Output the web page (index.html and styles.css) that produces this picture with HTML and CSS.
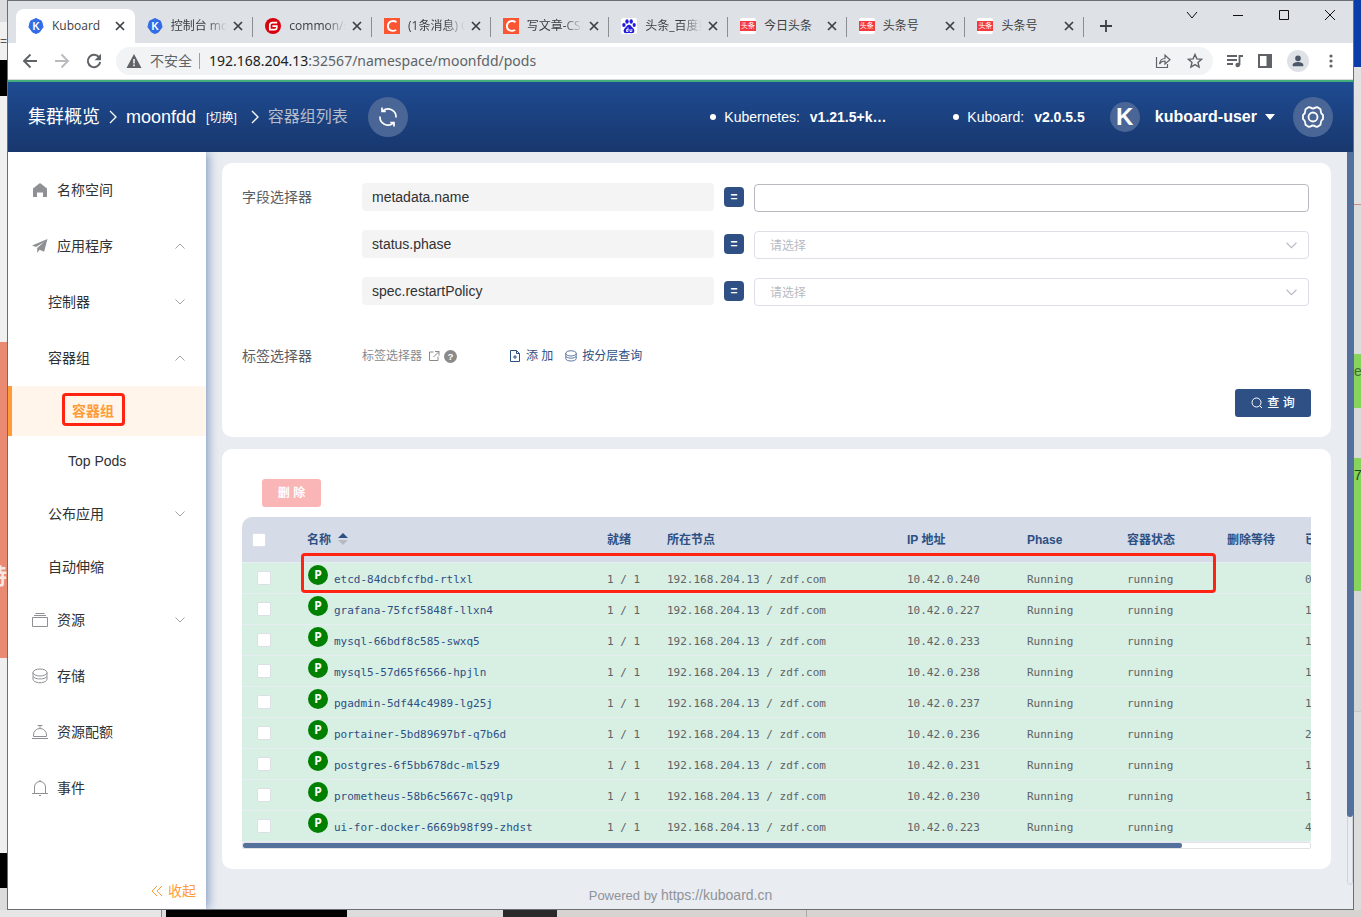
FILE: index.html
```html
<!DOCTYPE html>
<html lang="zh-CN">
<head>
<meta charset="utf-8">
<title>Kuboard</title>
<link rel="stylesheet" href="styles.css">
</head>
<body>
<svg class="defs" aria-hidden="true">
  <symbol id="i-close" viewBox="0 0 10 10"><path d="M1 1l8 8M9 1L1 9" fill="none" stroke="currentColor" stroke-width="1.7"/></symbol>
  <symbol id="i-right" viewBox="0 0 8 14"><path d="M1 1l6 6-6 6" fill="none" stroke="currentColor" stroke-width="1.3"/></symbol>
  <symbol id="i-down" viewBox="0 0 10 6"><path d="M.5 .5L5 5l4.500-4.500" fill="none" stroke="currentColor" stroke-width="1"/></symbol>
  <symbol id="i-up" viewBox="0 0 10 6"><path d="M.5 5.500L5 1l4.500 4.500" fill="none" stroke="currentColor" stroke-width="1"/></symbol>
  <symbol id="i-kuboard" viewBox="0 0 16 16"><path d="M8 .5l5.500 2.600 1.600 5.900-3.800 5.200L8 15.500l-3.300-1.300L.9 9l1.600-5.900z" fill="#326ce5" stroke="#326ce5" stroke-linejoin="round"/><text x="8" y="11.500" text-anchor="middle" font-family="Liberation Sans, sans-serif" font-size="10" font-weight="700" fill="#fff">K</text></symbol>
  <symbol id="i-disks" viewBox="0 0 16 16"><g fill="none" stroke="currentColor"><ellipse cx="8" cy="4.500" rx="7" ry="3.500"/><path d="M1 4.500v3.200c0 1.900 3 3.200 7 3.200s7-1.300 7-3.200V4.500M1 8.500v2.800c0 1.900 3 3.400 7 3.400s7-1.500 7-3.400V8.500"/></g></symbol>
</svg>

<aside class="edge edge-left" aria-hidden="true">
  <div class="l1"></div><div class="l2">=6</div><div class="l3"></div><div class="l4"></div><div class="l5">特</div><div class="l6"></div><div class="l7"></div><div class="l8"></div>
</aside>

<div class="window">
  <div class="tabstrip">
    <div class="tabs">
      <div class="tab active"><svg class="fav"><use href="#i-kuboard"/></svg><span>Kuboard</span><button aria-label="关闭"><svg><use href="#i-close"/></svg></button></div>
      <div class="tab"><svg class="fav"><use href="#i-kuboard"/></svg><span>控制台 moonfdd</span><button aria-label="关闭"><svg><use href="#i-close"/></svg></button></div>
      <div class="tab"><svg class="fav" viewBox="0 0 16 16"><circle cx="8" cy="8" r="8" fill="#d7000f"/><path d="M12.200 4.600H7.300a2.500 2.500 0 0 0-2.500 2.500v4.500h4.900a2.100 2.100 0 0 0 2.100-2.100V8.200H7.400" fill="none" stroke="#fff" stroke-width="1.700"/></svg><span>common/src</span><button aria-label="关闭"><svg><use href="#i-close"/></svg></button></div>
      <div class="tab"><svg class="fav" viewBox="0 0 16 16"><path fill="#fc5531" d="M0 0h16v16H0z"/><path d="M12.500 4.100C9 2 4.200 3.200 3.900 8c-.2 4.800 4.600 5.700 8.300 4" fill="none" stroke="#fff" stroke-width="1.900"/></svg><span>(1条消息) CSDN</span><button aria-label="关闭"><svg><use href="#i-close"/></svg></button></div>
      <div class="tab"><svg class="fav" viewBox="0 0 16 16"><path fill="#fc5531" d="M0 0h16v16H0z"/><path d="M12.500 4.100C9 2 4.200 3.200 3.900 8c-.2 4.800 4.600 5.700 8.300 4" fill="none" stroke="#fff" stroke-width="1.900"/></svg><span>写文章-CSDN</span><button aria-label="关闭"><svg><use href="#i-close"/></svg></button></div>
      <div class="tab"><svg class="fav" viewBox="0 0 16 16"><rect width="16" height="16" rx="2" fill="#fff"/><g fill="#2319dc"><ellipse cx="2.900" cy="7" rx="1.700" ry="2.100"/><ellipse cx="6" cy="3.500" rx="1.700" ry="2.300"/><ellipse cx="10.200" cy="3.500" rx="1.700" ry="2.300"/><ellipse cx="13.200" cy="7" rx="1.600" ry="2.100"/><path d="M8 6.800c-2 0-2.400 2-3.700 3-1.500 1.300-2 2.500-1.500 4 .6 2 2.700 1.300 5.200 1.300s4.600.7 5.200-1.300c.5-1.500 0-2.700-1.500-4-1.300-1-1.700-3-3.700-3z"/></g><path d="M7 9.500v4H5.500v-2H7M9 11v2.500h1.800V11" fill="none" stroke="#fff" stroke-width=".9"/></svg><span>头条_百度搜索</span><button aria-label="关闭"><svg><use href="#i-close"/></svg></button></div>
      <div class="tab"><i class="fav tt">头条</i><span>今日头条</span><button aria-label="关闭"><svg><use href="#i-close"/></svg></button></div>
      <div class="tab"><i class="fav tt">头条</i><span>头条号</span><button aria-label="关闭"><svg><use href="#i-close"/></svg></button></div>
      <div class="tab"><i class="fav tt">头条</i><span>头条号</span><button aria-label="关闭"><svg><use href="#i-close"/></svg></button></div>
    </div>
    <button class="newtab" aria-label="新标签页"><svg viewBox="0 0 12 12"><path d="M6 0v12M0 6h12" stroke="currentColor" stroke-width="1.800"/></svg></button>
    <div class="winctl">
      <button aria-label="搜索标签页"><svg viewBox="0 0 12 12"><path d="M1 3l5 6 5-6" fill="none" stroke="currentColor"/></svg></button>
      <button aria-label="最小化"><svg viewBox="0 0 12 12"><path d="M1 6.500h10" stroke="currentColor"/></svg></button>
      <button aria-label="最大化"><svg viewBox="0 0 12 12"><path d="M1.500 1.500h9v9h-9z" fill="none" stroke="currentColor"/></svg></button>
      <button aria-label="关闭窗口"><svg viewBox="0 0 12 12"><path d="M1 1l10 10M11 1L1 11" stroke="currentColor"/></svg></button>
    </div>
  </div>

  <div class="toolbar">
    <button aria-label="后退"><svg viewBox="0 0 16 16"><path d="M15 8H2M8.500 1.500L2 8l6.500 6.500" fill="none" stroke="currentColor" stroke-width="1.900"/></svg></button>
    <button class="dim" aria-label="前进"><svg viewBox="0 0 16 16"><path d="M1 8h13M7.500 1.500L14 8l-6.500 6.500" fill="none" stroke="currentColor" stroke-width="1.900"/></svg></button>
    <button aria-label="刷新"><svg viewBox="0 0 16 16"><path d="M13.300 4.600A6.200 6.200 0 1 0 14.200 9" fill="none" stroke="currentColor" stroke-width="2"/><path d="M15 .8v6.400H8.600z" fill="currentColor"/></svg></button>
    <div class="omnibox">
      <svg class="warn" viewBox="0 0 16 16"><path d="M8 1l7.500 14H.5z" fill="currentColor"/><path d="M8 6v4.500M8 11.500v1.700" stroke="#f1f3f4" stroke-width="1.600"/></svg>
      <span class="insecure">不安全</span>
      <span class="url"><b>192.168.204.13</b>:32567/namespace/moonfdd/pods</span>
      <button aria-label="分享"><svg viewBox="0 0 16 16"><path d="M1.500 4v10.500h11V11M4.500 11c.5-3.800 2.700-5.500 5.500-5.500V2.200L15 6.700l-5 4.200V8C7.500 8 5.800 8.800 4.500 11z" fill="none" stroke="currentColor" stroke-width="1.200"/></svg></button>
      <button aria-label="收藏"><svg viewBox="0 0 16 16"><path d="M8 1.500l1.900 4.400 4.700.4-3.600 3.100 1.100 4.700L8 11.600l-4.100 2.500L5 9.400 1.400 6.300l4.700-.4z" fill="none" stroke="currentColor" stroke-width="1.400"/></svg></button>
    </div>
    <div class="extras">
      <button aria-label="媒体"><svg viewBox="0 0 16 16"><path d="M0 3h10M0 7h10M0 11h6M12.500 12V3H16" fill="none" stroke="currentColor" stroke-width="1.800"/><circle cx="10.700" cy="12" r="2.300" fill="currentColor"/></svg></button>
      <button aria-label="侧边栏"><svg viewBox="0 0 16 16"><path d="M2 2h12v12H2z" fill="none" stroke="currentColor" stroke-width="2"/><path d="M9.500 2H14v12H9.500z" fill="currentColor"/></svg></button>
      <button class="profile" aria-label="用户"><svg viewBox="0 0 16 16"><circle cx="8" cy="5" r="3.200" fill="currentColor"/><path d="M2 14v-2c0-2 4-3 6-3s6 1 6 3v2z" fill="currentColor"/></svg></button>
      <button aria-label="菜单"><svg viewBox="0 0 16 16"><g fill="currentColor"><circle cx="8" cy="3" r="1.600"/><circle cx="8" cy="8" r="1.600"/><circle cx="8" cy="13" r="1.600"/></g></svg></button>
    </div>
  </div>

  <header class="top">
    <nav class="crumbs" aria-label="面包屑">
      <a href="#">集群概览</a><svg class="sep"><use href="#i-right"/></svg><a href="#">moonfdd</a><a class="switch" href="#">[切换]</a><svg class="sep"><use href="#i-right"/></svg><span>容器组列表</span>
    </nav>
    <button class="round" aria-label="刷新列表"><svg viewBox="0 0 20 20"><g fill="none" stroke="currentColor" stroke-width="1.700"><path d="M4.800 3.900A8 8 0 0 1 18 10.500M15.200 16.100A8 8 0 0 1 2 9.500"/><path d="M7.800 4.300H4V.6M12.200 15.700H16v3.700"/></g></svg></button>
    <div class="versions">
      <p class="k8s"><i></i>Kubernetes:<b>v1.21.5+k…</b></p>
      <p><i></i>Kuboard:<b>v2.0.5.5</b></p>
    </div>
    <span class="avatar">K</span>
    <button class="user">kuboard-user<i></i></button>
    <button class="round" aria-label="设置"><svg class="gear" viewBox="0 0 24 24"><g fill="none" stroke="currentColor" stroke-width="1.800" stroke-linejoin="round"><path d="M7.500 2.200l2 .3q2.500 2 5 0l2-.3 3 2 .2 1.800q0 2.600 2.300 4v4q-2.300 1.400-2.300 4l-.2 1.800-3 2-2-.3q-2.500-2-5 0l-2 .3-3-2-.2-1.800q0-2.600-2.300-4v-4q2.300-1.400 2.300-4l.2-1.800z"/><circle cx="12" cy="12" r="4.500"/></g></svg></button>
  </header>

  <div class="body">
    <nav class="side" aria-label="主菜单">
      <ul>
        <li><a href="#"><svg class="ico" viewBox="0 0 16 16"><path d="M8 1L1 6.500V15h4v-4.500h6V15h4V6.500z" fill="currentColor"/></svg>名称空间</a></li>
        <li><a href="#"><svg class="ico" viewBox="0 0 16 16"><path d="M15.500 1L0 7.500l4 1.600L12 4 5.200 10v5l2.300-3.300 4.600 2z" fill="currentColor"/></svg>应用程序<svg class="arrow"><use href="#i-up"/></svg></a></li>
        <li class="sub"><a href="#">控制器<svg class="arrow"><use href="#i-down"/></svg></a></li>
        <li class="sub"><a href="#">容器组<svg class="arrow"><use href="#i-up"/></svg></a></li>
        <li class="leaf current"><a href="#">容器组</a><div class="mark"></div></li>
        <li class="leaf"><a href="#">Top Pods</a></li>
        <li class="sub"><a href="#">公布应用<svg class="arrow"><use href="#i-down"/></svg></a></li>
        <li class="sub short"><a href="#">自动伸缩</a></li>
        <li><a href="#"><svg class="ico" viewBox="0 0 16 16"><path d="M.5 5.500h15v9H.5zM2 3.500h12M3.500 1.500h9" fill="none" stroke="currentColor"/></svg>资源<svg class="arrow"><use href="#i-down"/></svg></a></li>
        <li><a href="#"><svg class="ico"><use href="#i-disks"/></svg>存储</a></li>
        <li><a href="#"><svg class="ico" viewBox="0 0 16 16"><path d="M0 14.500h16M1.500 12.500h13V11a6.500 6.500 0 0 0-13 0zM8 4.500v-3M5.500 1.500h5" fill="none" stroke="currentColor"/></svg>资源配额</a></li>
        <li><a href="#"><svg class="ico" viewBox="0 0 16 16"><path d="M0 13.500h16M2.500 13.500V7a5.500 5.500 0 0 1 11 0v6.500M8 1.500V0M7 15.500h2" fill="none" stroke="currentColor"/></svg>事件</a></li>
      </ul>
      <button class="collapse"><svg viewBox="0 0 12 12"><path d="M6 1L1 6l5 5M11 1L6 6l5 5" fill="none" stroke="currentColor"/></svg>收起</button>
    </nav>

    <main class="content">
      <form class="card filter">
        <div class="fields">
          <span class="label">字段选择器</span>
          <div class="rows">
            <div class="frow"><label for="f-name">metadata.name</label><b>=</b><input id="f-name" type="text"></div>
            <div class="frow"><label for="f-phase">status.phase</label><b>=</b><div class="pick"><select id="f-phase"><option>请选择</option></select><svg><use href="#i-down"/></svg></div></div>
            <div class="frow"><label for="f-policy">spec.restartPolicy</label><b>=</b><div class="pick"><select id="f-policy"><option>请选择</option></select><svg><use href="#i-down"/></svg></div></div>
          </div>
        </div>
        <div class="tags">
          <span class="label">标签选择器</span>
          <a class="doc" href="#">标签选择器<svg viewBox="0 0 12 12"><path d="M5.500 2h-4v8.500H10V6.500M7 1.500h4v4M11 1.500L5.500 7" fill="none" stroke="currentColor"/></svg><svg viewBox="0 0 12 12"><circle cx="6" cy="6" r="6" fill="currentColor"/><text x="6" y="9" text-anchor="middle" font-family="Liberation Sans, sans-serif" font-size="9" font-weight="700" fill="#fff">?</text></svg></a>
          <button type="button"><svg viewBox="0 0 12 12"><path d="M1.500.5h6l3 3v8h-9zM7.500.5v3h3M6 5v4M4 7h4" fill="none" stroke="currentColor"/></svg>添 加</button>
          <button type="button"><svg><use href="#i-disks"/></svg>按分层查询</button>
        </div>
        <button class="query" type="submit"><svg viewBox="0 0 12 12"><circle cx="5.500" cy="5.500" r="4.500" fill="none" stroke="currentColor"/><path d="M8.700 8.700L11 11" stroke="currentColor"/></svg>查 询</button>
      </form>

      <section class="card list">
        <button class="delete" disabled>删 除</button>
        <div class="scroller">
          <table>
            <colgroup><col class="c0"><col class="c1"><col class="c2"><col class="c3"><col class="c4"><col class="c5"><col class="c6"><col class="c7"><col class="c8"></colgroup>
            <thead><tr><th><input type="checkbox" aria-label="全选"></th><th>名称<svg class="sort" viewBox="0 0 10 12"><path d="M5 0l5 5H0z" fill="#2d5084"/><path d="M0 7h10l-5 5z" fill="#b7bac0"/></svg></th><th>就绪</th><th>所在节点</th><th>IP 地址</th><th>Phase</th><th>容器状态</th><th>删除等待</th><th>已</th></tr></thead>
            <tbody>
              <tr><td><input type="checkbox" aria-label="etcd"></td><td><i>P</i><a href="#">etcd-84dcbfcfbd-rtlxl</a></td><td>1 / 1</td><td>192.168.204.13 / zdf.com</td><td>10.42.0.240</td><td>Running</td><td>running</td><td></td><td>0</td></tr>
              <tr><td><input type="checkbox" aria-label="grafana"></td><td><i>P</i><a href="#">grafana-75fcf5848f-llxn4</a></td><td>1 / 1</td><td>192.168.204.13 / zdf.com</td><td>10.42.0.227</td><td>Running</td><td>running</td><td></td><td>1</td></tr>
              <tr><td><input type="checkbox" aria-label="mysql"></td><td><i>P</i><a href="#">mysql-66bdf8c585-swxq5</a></td><td>1 / 1</td><td>192.168.204.13 / zdf.com</td><td>10.42.0.233</td><td>Running</td><td>running</td><td></td><td>1</td></tr>
              <tr><td><input type="checkbox" aria-label="mysql5"></td><td><i>P</i><a href="#">mysql5-57d65f6566-hpjln</a></td><td>1 / 1</td><td>192.168.204.13 / zdf.com</td><td>10.42.0.238</td><td>Running</td><td>running</td><td></td><td>1</td></tr>
              <tr><td><input type="checkbox" aria-label="pgadmin"></td><td><i>P</i><a href="#">pgadmin-5df44c4989-lg25j</a></td><td>1 / 1</td><td>192.168.204.13 / zdf.com</td><td>10.42.0.237</td><td>Running</td><td>running</td><td></td><td>1</td></tr>
              <tr><td><input type="checkbox" aria-label="portainer"></td><td><i>P</i><a href="#">portainer-5bd89697bf-q7b6d</a></td><td>1 / 1</td><td>192.168.204.13 / zdf.com</td><td>10.42.0.236</td><td>Running</td><td>running</td><td></td><td>2</td></tr>
              <tr><td><input type="checkbox" aria-label="postgres"></td><td><i>P</i><a href="#">postgres-6f5bb678dc-ml5z9</a></td><td>1 / 1</td><td>192.168.204.13 / zdf.com</td><td>10.42.0.231</td><td>Running</td><td>running</td><td></td><td>1</td></tr>
              <tr><td><input type="checkbox" aria-label="prometheus"></td><td><i>P</i><a href="#">prometheus-58b6c5667c-qq9lp</a></td><td>1 / 1</td><td>192.168.204.13 / zdf.com</td><td>10.42.0.230</td><td>Running</td><td>running</td><td></td><td>1</td></tr>
              <tr><td><input type="checkbox" aria-label="ui-for-docker"></td><td><i>P</i><a href="#">ui-for-docker-6669b98f99-zhdst</a></td><td>1 / 1</td><td>192.168.204.13 / zdf.com</td><td>10.42.0.223</td><td>Running</td><td>running</td><td></td><td>4</td></tr>
            </tbody>
          </table>
          <div class="mark"></div>
        </div>
        <div class="hbar"><div></div></div>
      </section>
      <footer>Powered by <a href="#">https://kuboard.cn</a></footer>
    </main>
    <div class="vbar"><div></div></div>
  </div>
</div>

<aside class="edge edge-right" aria-hidden="true">
  <div class="r1"></div><div class="r2"></div><div class="r3"></div><div class="r4">e</div><div class="r5"></div><div class="r6">7.</div><div class="r7"></div><div class="r8"></div>
</aside>
<div class="edge-bottom" aria-hidden="true"><div class="b1"></div><div class="b2"></div><div class="b3"></div><div class="b4"></div><div class="b5"></div><div class="b6"></div></div>
</body>
</html>
```

FILE: styles.css
```css
* { box-sizing: border-box; }
body {
  margin: 0;
  min-height: 100vh;
  display: grid;
  grid-template-columns: 7px minmax(0, 1fr) 7px;
  grid-template-rows: 1fr 7px;
  background: #dcdcdc;
  font: 14px/20px "Liberation Sans", "Noto Sans CJK SC", sans-serif;
  color: #303133;
}
button { border: 0; padding: 0; background: none; font: inherit; color: inherit; display: flex; align-items: center; }
a { color: inherit; text-decoration: none; }
p, ul { margin: 0; padding: 0; list-style: none; }
i { font-style: normal; }
svg { flex: none; display: block; }
.defs { position: absolute; width: 0; height: 0; }

/* Desktop visible around the window */
.edge { display: flex; flex-direction: column; overflow: hidden; }
.l1 { height: 22px; background: #dcdde0; }
.l2 { height: 38px; background: #f0f0f0; line-height: 38px; font-size: 12px; color: #555; }
.l3 { height: 36px; background: #000; }
.l4 { height: 246px; background: #f0f0f0; }
.l5 { height: 316px; background: #ea8a72; color: #f4e8e4; font-size: 22px; line-height: 470px; font-weight: 700; direction: rtl; }
.l6 { height: 195px; background: #efefef; }
.l7 { height: 35px; background: #000; }
.l8 { flex: 1; background: #dcdcdc; }
.r1 { height: 67px; background: #0a3da8; }
.r2 { height: 137px; background: #e2e2e2; }
.r3 { height: 150px; background: #dcdcdc; border-top: 1px solid #cf8d86; }
.r4 { height: 54px; background: #86d45c; line-height: 34px; color: #456a35; }
.r5 { height: 50px; background: #dadada; }
.r6 { height: 133px; background: #86d45c; line-height: 34px; color: #23401a; }
.r7 { height: 120px; background: #d6d6d6; }
.r8 { flex: 1; background: #dcdcdc; border-top: 1px solid #c8c8c8; }
.edge-bottom { grid-column: 1 / -1; display: flex; background: #d6d3d1; }
.b1 { width: 162px; background: #e6e6e6; border-right: 1px solid #888; }
.b2 { width: 4px; background: #ddd; }
.b3 { width: 181px; background: #000; }
.b4 { width: 156px; background: #dcdcdc; }
.b5 { width: 54px; background: #2a2a2a; }
.b6 { width: 250px; border-right: 1px solid #aaa; }

.window { border: 1px solid #6a6d72; display: flex; flex-direction: column; min-width: 0; background: #fff; }

/* Browser chrome */
.tabstrip { height: 42px; background: #dee1e6; display: flex; padding: 8px 0 0 8px; color: #3c4043; }
.tabs { flex: 0 1 1068px; display: flex; min-width: 0; font: 12px/20px "Open Sans", "Noto Sans CJK SC", sans-serif; }
.tab { flex: 1 1 0; min-width: 0; display: flex; align-items: center; padding: 0 10px 0 12px; position: relative; }
.tab::after { content: ""; position: absolute; right: 0; top: 8px; height: 20px; width: 1px; background: #8a8d91; }
.tab.active { background: #fff; border-radius: 8px 8px 0 0; }
.tab.active::after { display: none; }
.fav { width: 16px; height: 16px; flex: none; margin-right: 8px; }
.tt { background: #f33b3f; color: #fff; font-size: 7px; line-height: 10px; text-align: center; border: solid #fff; border-width: 3px 0; border-radius: 2px; white-space: nowrap; overflow: hidden; }
.tab span { flex: 1; min-width: 0; overflow: hidden; white-space: nowrap; -webkit-mask-image: linear-gradient(90deg, #000 65%, transparent); mask-image: linear-gradient(90deg, #000 65%, transparent); }
.tab:nth-child(1) span, .tab:nth-child(n+7) span { -webkit-mask-image: none; mask-image: none; }
.tab button { margin-left: 6px; }
.tab button svg { width: 10px; height: 10px; }
.newtab { margin-left: 16px; }
.newtab svg { width: 12px; height: 12px; }
.winctl { margin-left: auto; display: flex; gap: 34px; align-items: flex-start; padding-right: 17px; color: #111; }
.winctl svg { width: 12px; height: 12px; }

.toolbar { height: 37px; display: flex; align-items: center; padding: 0 14px; gap: 16px; color: #5f6368; border-bottom: 1px solid #d8dade; }
.toolbar svg { width: 16px; height: 16px; }
.dim { color: #b9bbbe; }
.omnibox { flex: 1; min-width: 0; height: 28px; margin-left: -2px; border-radius: 14px; background: #f1f3f4; display: flex; align-items: center; padding: 0 10px; gap: 16px; }
.omnibox .insecure { margin-left: -8px; padding-right: 7px; border-right: 1px solid #9aa0a6; line-height: 16px; }
.omnibox .url { margin-left: -7px; flex: 1; font: 14px/20px "Noto Sans", sans-serif; white-space: nowrap; }
.url b { font-weight: 400; color: #202124; }
.extras { display: flex; align-items: center; gap: 14px; margin-left: -2px; }
.extras .profile { width: 22px; height: 22px; border-radius: 50%; background: #dee1e6; justify-content: center; color: #4b5768; }
.profile svg { width: 14px; height: 14px; }

/* Application header */
.top { height: 72px; border-top: 2px solid #41ae7c; background: linear-gradient(#1e4b92, #18376d); color: #fff; display: flex; align-items: center; padding: 0 20px; }
.crumbs { display: flex; align-items: center; font-size: 18px; white-space: nowrap; }
.crumbs .sep { width: 8px; height: 14px; margin: 0 9px; }
.crumbs .switch { font-size: 12px; margin: 2px 5px 0 10px; }
.crumbs span { font-size: 16px; color: #b5bccb; }
.round { width: 40px; height: 40px; border-radius: 50%; background: #4a6696; justify-content: center; }
.crumbs + .round { margin-left: 20px; }
.round svg { width: 20px; height: 20px; }
.round .gear { width: 24px; height: 24px; }
.versions { margin-left: auto; display: flex; white-space: nowrap; }
.versions p { display: flex; align-items: center; }
.versions .k8s { width: 243px; }
.versions i { width: 6px; height: 6px; border-radius: 50%; background: #fff; margin-right: 8px; }
.versions b { margin-left: 10px; }
.avatar { width: 30px; height: 30px; margin: 0 15px 0 25px; border-radius: 50%; background: #4a6696; font: 700 24px/30px "Liberation Sans", sans-serif; text-align: center; }
.user { font-size: 16px; font-weight: 700; margin-right: 18px; }
.user i { border: 5px solid transparent; border-top: 6px solid #fff; border-bottom: 0; margin-left: 8px; }

.body { flex: 1; display: flex; min-width: 0; background: #e9ecf1; overflow: hidden; }

/* Side menu */
.side { width: 198px; flex: none; background: #fff; box-shadow: 2px 0 10px #7f98c0; display: flex; flex-direction: column; padding-top: 10px; z-index: 1; }
.side li { position: relative; }
.side li a { display: flex; align-items: center; height: 56px; padding: 0 21px 0 24px; }
.side .ico { width: 16px; height: 16px; margin-right: 9px; color: #8f9093; }
.side .arrow { width: 10px; height: 6px; margin-left: auto; color: #a0a3a8; }
.side .sub a { padding-left: 40px; }
.side .short a, .side .leaf a { height: 50px; }
.side .leaf a { padding-left: 60px; }
.side .current a { background: #fff5ea; border-left: 4px solid #ff9c38; color: #ff9c38; font-weight: 700; }
.mark { position: absolute; border: 3px solid #ff2412; border-radius: 4px; pointer-events: none; }
.side .mark { left: 54px; top: 7px; width: 63px; height: 33px; }
.collapse { margin: auto 10px 8px auto; gap: 5px; color: #ff9c38; }
.collapse svg { width: 12px; height: 12px; }

/* Content */
.content { flex: 1; min-width: 0; padding: 11px 16px 0; }
.card { background: #fff; border-radius: 10px; padding: 20px; }
.label { width: 120px; flex: none; color: #5c5e63; }
.fields { display: flex; line-height: 28px; }
.rows { flex: 1; display: flex; flex-direction: column; gap: 19px; padding-right: 2px; }
.frow { display: flex; align-items: center; gap: 10px; height: 28px; }
.frow label { flex: 0 1 352px; height: 28px; border-radius: 4px; background: #f4f4f4; padding: 0 10px; line-height: 28px; }
.frow b { width: 20px; height: 20px; border-radius: 4px; background: #2e5084; color: #fff; font-size: 12px; line-height: 20px; text-align: center; }
.frow > input, .pick { flex: 1; min-width: 0; height: 28px; margin-top: 2px; }
.frow > input { border: 1px solid #b8bac0; border-radius: 4px; padding: 0 15px; font: inherit; outline: 0; }
.pick { position: relative; }
.pick select { appearance: none; width: 100%; height: 28px; border: 1px solid #dcdfe6; border-radius: 4px; background: #fff; padding: 0 15px; font: inherit; font-size: 12px; color: #b8bbc2; display: block; }
.pick svg { position: absolute; right: 12px; top: 11px; width: 11px; height: 7px; color: #b8bbc2; }
.tags { display: flex; align-items: center; margin-top: 41px; font-size: 12px; color: #2d5084; }
.tags .label { font-size: 14px; }
.tags svg { width: 12px; height: 12px; }
.tags .doc { display: flex; align-items: center; color: #8a8a8a; margin-right: 52px; }
.tags .doc svg { margin-left: 6px; }
.tags .doc svg:last-child { width: 13px; height: 13px; margin-left: 4px; }
.tags button { gap: 5px; margin-right: 12px; }
.query { height: 28px; width: 76px; margin: 23px 0 0 auto; background: #2e5084; color: #fff; border-radius: 3px; font-size: 12px; font-weight: 500; justify-content: center; gap: 4px; }
.query svg { width: 12px; height: 12px; }

.list { margin-top: 12px; padding-top: 30px; }
.delete { height: 28px; width: 59px; margin: 0 0 10px 20px; justify-content: center; background: #fab6b6; color: #fff; border-radius: 3px; font-size: 12px; font-weight: 700; }
.scroller { position: relative; overflow: hidden; border-radius: 10px 0 0 0; }
table { width: 1213px; border-collapse: separate; border-spacing: 0; table-layout: fixed; font: 11px/16px "DejaVu Sans Mono", monospace; color: #606266; }
.c0 { width: 55px; } .c1 { width: 300px; } .c2 { width: 60px; } .c3 { width: 240px; } .c4 { width: 120px; } .c5 { width: 100px; } .c6 { width: 100px; } .c7 { width: 78px; } .c8 { width: 160px; }
th { height: 46px; padding: 0 10px; text-align: left; background: #d5dbe7; color: #2d5084; font: 700 12px/20px "Liberation Sans", "Noto Sans CJK SC", sans-serif; border-bottom: 1px solid #e8ecf3; }
td { height: 31px; padding: 4px 10px 0; background: #d8efe4; border-bottom: 1px solid #e8ecf3; white-space: nowrap; }
td:first-child { padding: 0 0 0 15px; }
td:nth-child(2) { padding: 0 0 4px 11px; }
td a { color: #2d5084; margin-left: 6px; }
td i { display: inline-block; width: 20px; height: 20px; border-radius: 50%; background: #008000; color: #fff; font: 700 12px/20px "Open Sans", sans-serif; text-align: center; vertical-align: 4px; }
input[type="checkbox"] { appearance: none; display: block; width: 14px; height: 14px; margin: 0; background: #fff; border: 1px solid #dcdfe6; border-radius: 2px; }
.sort { display: inline-block; width: 10px; height: 12px; margin-left: 7px; vertical-align: -1px; }
.scroller .mark { left: 59px; top: 36px; width: 915px; height: 40px; }
.hbar { height: 7px; border: 1px solid #e0e2e6; border-radius: 2px; }
.hbar div { width: 88%; height: 5px; background: #54709d; border-radius: 2px; }
footer { height: 40px; padding: 16px 192px 0 0; text-align: center; color: #909399; font-size: 13px; }
footer a { font-size: 14px; }
.vbar { width: 6px; height: 733px; border: 1px solid #d0d3d9; border-radius: 3px; }
.vbar div { height: 665px; width: 6px; margin: -1px; background: #54709d; border-radius: 0 0 3px 3px; }
```
